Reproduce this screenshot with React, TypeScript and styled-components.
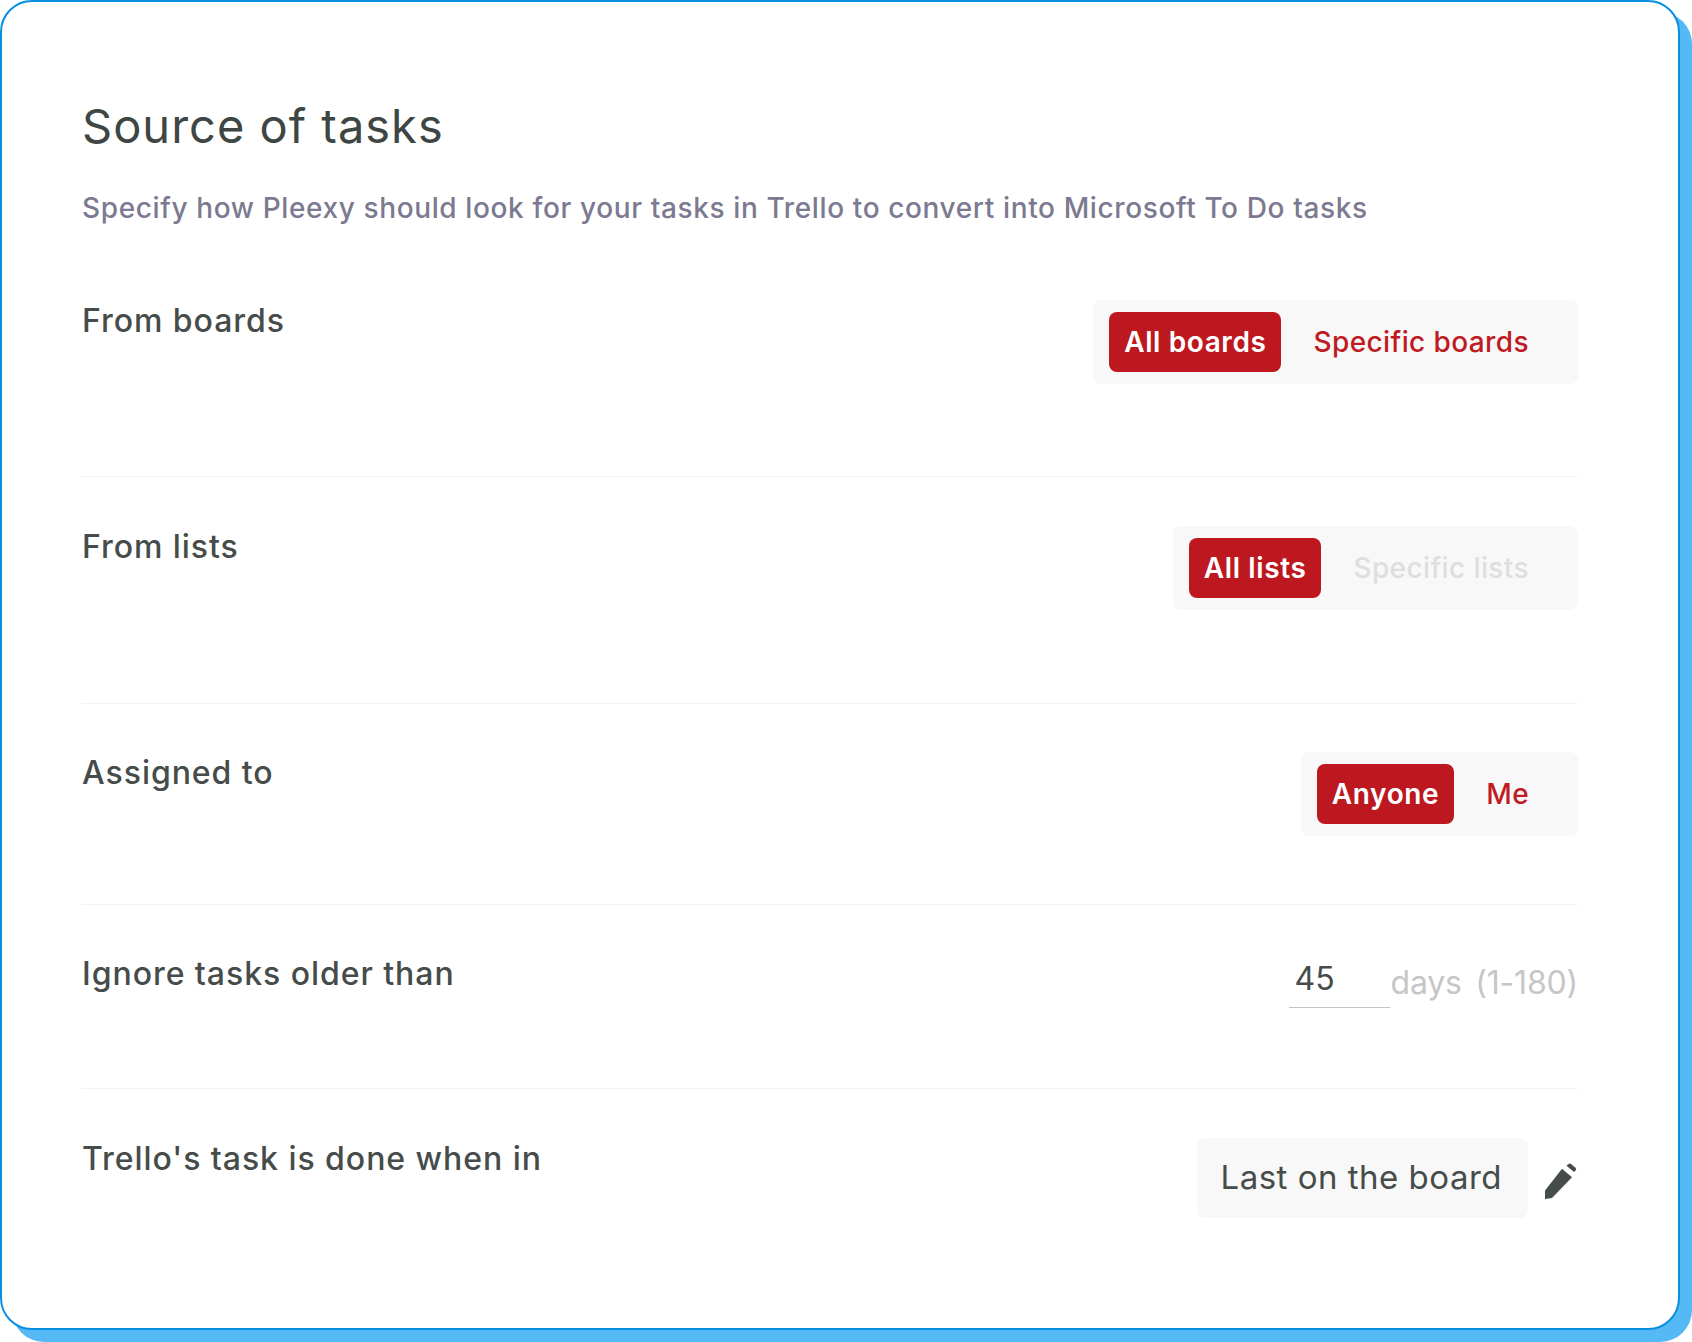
import { createGlobalStyle, styled } from "styled-components";

const Global = createGlobalStyle`
    html, body {
        margin: 0;
        padding: 0;
        background: #ffffff;
    }
    body {
        font-family: Inter, "Liberation Sans", sans-serif;
    }
`

const Page = styled.div`
    width: 1692px;
    height: 1342px;
    overflow: hidden;
`

const Card = styled.div`
    box-sizing: border-box;
    width: 1680px;
    height: 1330px;
    padding: 95px 100px 0 80px;
    background: #ffffff;
    border: 2px solid #0a8ee0;
    border-radius: 32px;
    box-shadow: 12px 12px 0 #55b9f6;
`

const Title = styled.h1`
    margin: 0;
    font-size: 47px;
    line-height: 58px;
    font-weight: 400;
    letter-spacing: 1px;
    color: #3e4644;
`

const Subtitle = styled.p`
    margin: 35px 0 25px;
    font-size: 28px;
    line-height: 36px;
    font-weight: 500;
    letter-spacing: 0.62px;
    color: #7b7a90;
`

const Row = styled.div<{ $bottom: number; $top?: number; $last?: boolean }>`
    display: flex;
    justify-content: space-between;
    align-items: flex-start;
    padding-top: ${p => p.$top ?? 48}px;
    padding-bottom: ${p => p.$bottom}px;
    border-bottom: ${p => (p.$last ? "none" : "1px solid #f3f3f3")};
`

const Label = styled.div`
    margin-top: 1px;
    font-size: 32px;
    line-height: 40px;
    font-weight: 500;
    letter-spacing: 0.95px;
    color: #464c4a;
`

const Segment = styled.div`
    display: flex;
    align-items: center;
    box-sizing: border-box;
    height: 84px;
    padding: 0 49px 0 16px;
    gap: 32px;
    background: #f8f8f8;
    border-radius: 8px;
`

const Active = styled.div`
    display: flex;
    align-items: center;
    height: 60px;
    padding: 0 15px;
    font-size: 28px;
    font-weight: 600;
    letter-spacing: 0.6px;
    color: #ffffff;
    background: #bd1820;
    border-radius: 8px;
`

const Option = styled.div<{ $disabled?: boolean }>`
    font-size: 28px;
    font-weight: 500;
    letter-spacing: 0.4px;
    color: ${p => (p.$disabled ? "#dedede" : "#c01a22")};
`

const Days = styled.div`
    display: flex;
    align-items: flex-start;
`

const NumberInput = styled.input`
    box-sizing: border-box;
    width: 101px;
    height: 55px;
    padding: 0 0 3px 6px;
    border: none;
    border-bottom: 1px solid #c4c4c4;
    outline: none;
    background: transparent;
    font-family: inherit;
    font-size: 32px;
    color: #464c4a;
`

const Unit = styled.span`
    margin: 2px 0 0 1px;
    font-size: 32px;
    line-height: 56px;
    letter-spacing: -0.2px;
    word-spacing: -2px;
    white-space: pre;
    color: #c6c6c6;
`

const Done = styled.div`
    display: flex;
    align-items: center;
    gap: 17px;
`

const Pill = styled.div`
    display: flex;
    align-items: center;
    box-sizing: border-box;
    height: 80px;
    padding: 0 26px 2px 23px;
    font-size: 33px;
    letter-spacing: 0.5px;
    color: #464c4a;
    background: #f8f8f8;
    border-radius: 8px;
`

const Pencil = styled.svg`
    width: 33px;
    height: 37px;
    margin-top: 7px;
    fill: #464c4a;
`

export default function App() {
    return (
        <Page>
            <Global />
            <Card>
                <Title>Source of tasks</Title>
                <Subtitle>Specify how Pleexy should look for your tasks in Trello to convert into Microsoft To Do tasks</Subtitle>
                <Row $bottom={92} $top={49}>
                    <Label>From boards</Label>
                    <Segment>
                        <Active>All boards</Active>
                        <Option>Specific boards</Option>
                    </Segment>
                </Row>
                <Row $bottom={93} $top={49}>
                    <Label>From lists</Label>
                    <Segment>
                        <Active>All lists</Active>
                        <Option $disabled>Specific lists</Option>
                    </Segment>
                </Row>
                <Row $bottom={68}>
                    <Label>Assigned to</Label>
                    <Segment>
                        <Active>Anyone</Active>
                        <Option>Me</Option>
                    </Segment>
                </Row>
                <Row $bottom={77}>
                    <Label>Ignore tasks older than</Label>
                    <Days>
                        <NumberInput defaultValue="45" />
                        <Unit>days  (1-180)</Unit>
                    </Days>
                </Row>
                <Row $bottom={0} $top={49} $last>
                    <Label>Trello's task is done when in</Label>
                    <Done>
                        <Pill>Last on the board</Pill>
                        <Pencil viewBox="15 12 33 39" preserveAspectRatio="none">
                            <path d="M32 18L42 27L22 49L15 50L15 41Z" />
                            <path d="M38 13.5Q39.5 12 41 13L45.5 17Q47 18.5 45.5 20L44 21.5L36.5 15Z" />
                        </Pencil>
                    </Done>
                </Row>
            </Card>
        </Page>
    )
}
